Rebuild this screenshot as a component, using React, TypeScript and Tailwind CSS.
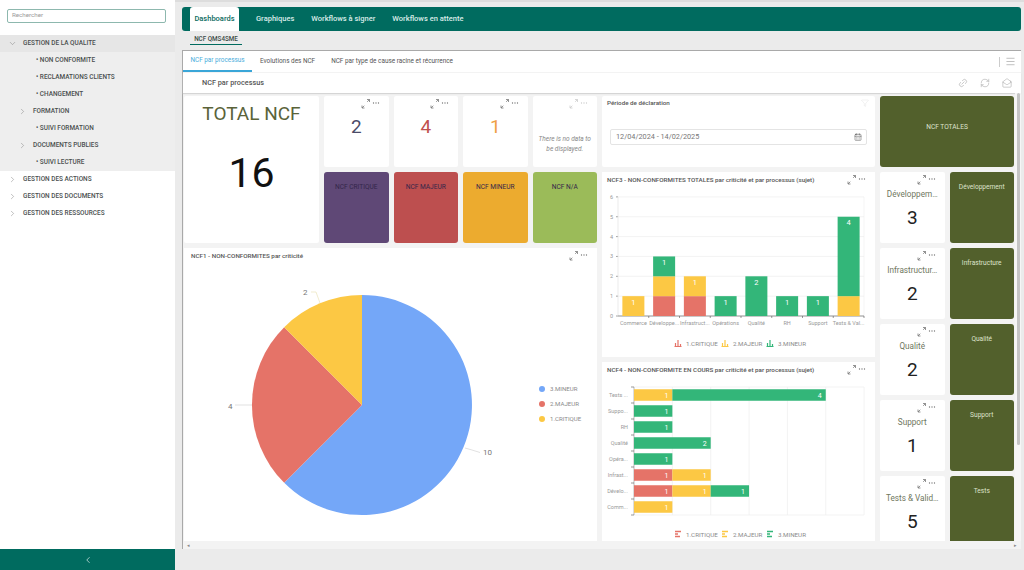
import React from "react";
import { ChevronDown, ChevronRight, ChevronLeft, Link2, RefreshCw, MailOpen, Filter, CalendarDays, Menu } from "lucide-react";

const RED = "#e57368";
const YEL = "#fcc844";
const GRN = "#33b679";
const BLU = "#74a7f8";

function Tools({ faint = false }: { faint?: boolean }) {
  const c = faint ? "#cccccc" : "#777777";
  return (
    <svg width="22" height="10" viewBox="0 0 22 10" className="absolute top-[3px] right-[8px]" fill="none">
      <path d="M3 6.5v2.5h2.5M3 9l2.3-2.3" stroke={c} strokeWidth="0.8" />
      <path d="M8 0.5h2.5v2.5M10.5 0.5l-2.3 2.3" stroke={c} strokeWidth="0.8" />
      <circle cx="14.5" cy="4" r="0.65" fill={c} />
      <circle cx="17" cy="4" r="0.65" fill={c} />
      <circle cx="19.5" cy="4" r="0.65" fill={c} />
    </svg>
  );
}

function SideRow({ label, level, open, caret }: { label: string; level: number; open?: boolean; caret?: boolean }) {
  const pad = level === 0 ? "pl-[23px]" : level === 1 ? "pl-[33px]" : "pl-[36px]";
  return (
    <div className={`relative h-[17px] flex items-center ${pad} text-[6.45px] font-medium text-[#4a4f4f] whitespace-nowrap`}>
      {caret && (
        <span className={`absolute top-[4px] ${level === 0 ? "left-[8px]" : "left-[18px]"} text-[#777]`}>
          {open ? <ChevronDown size={9} strokeWidth={1.2} /> : <ChevronRight size={9} strokeWidth={1.2} />}
        </span>
      )}
      {label}
    </div>
  );
}

function Kpi({ value, color, faint, label }: { value?: string; color?: string; faint?: boolean; label?: string }) {
  return (
    <div className="relative h-[71px] bg-white rounded-[2px] flex flex-col items-center overflow-hidden shrink-0">
      <Tools faint={faint} />
      {label && (
        <div className="mt-[15px] w-full text-center text-[8.2px] leading-[14px] text-[#6f7760] whitespace-nowrap">{label}</div>
      )}
      {value && (
        <div className={`${label ? "mt-[5px]" : "mt-[19px]"} text-[19px] leading-[24px]`} style={{ color }}>
          {value}
        </div>
      )}
      {!value && (
        <div className="mt-[38px] px-[2px] text-center text-[6.5px] leading-[10px] italic text-[#888]">
          There is no data to be displayed.
        </div>
      )}
    </div>
  );
}

function Tile({ label, bg, dark, top = "pt-[10px]" }: { label: string; bg: string; dark?: boolean; top?: string }) {
  return (
    <div
      className={`h-[71px] shrink-0 rounded-[3px] flex justify-center text-[6.6px] leading-[10px] ${top} ${dark ? "text-[#33264a]" : "text-[#dfe3cd]"}`}
      style={{ backgroundColor: bg }}
    >
      {label}
    </div>
  );
}

function Legend({ y, kind }: { y: number; kind: "v" | "h" }) {
  const items: [number, string, string][] = [
    [678, RED, "1.CRITIQUE"],
    [725, YEL, "2.MAJEUR"],
    [770, GRN, "3.MINEUR"],
  ];
  return (
    <g>
      {items.map(([x, c, t]) => (
        <g key={t}>
          {kind === "v" ? (
            <path d={`M${x - 2.5} ${y + 3}v-3M${x} ${y + 3}v-6M${x + 2.5} ${y + 3}v-2M${x - 3.5} ${y + 3.5}h7`} stroke={c} strokeWidth="1.2" />
          ) : (
            <path d={`M${x - 3} ${y - 2.5}h6M${x - 3} ${y}h3M${x - 3} ${y + 2.5}h5`} stroke={c} strokeWidth="1.3" />
          )}
          <text x={x + 8} y={y + 2.5} fontSize="6.2" fill="#8a8a8a">{t}</text>
        </g>
      ))}
    </g>
  );
}

function ChartV() {
  const x0 = 618, right = 864, y0 = 316, u = 19.85, cw = 30.75, bw = 22;
  const cats: [string, number, number, number][] = [
    ["Commerce", 0, 1, 0],
    ["Développe...", 1, 1, 1],
    ["Infrastruct...", 1, 1, 0],
    ["Opérations", 0, 0, 1],
    ["Qualité", 0, 0, 2],
    ["RH", 0, 0, 1],
    ["Support", 0, 0, 1],
    ["Tests & Val...", 0, 1, 4],
  ];
  return (
    <svg viewBox="602 190 273 167" className="block w-[273px] h-[167px]">
      {[0, 1, 2, 3, 4, 5, 6].map((n) => (
        <g key={n}>
          <line x1={x0} x2={right} y1={y0 - n * u} y2={y0 - n * u} stroke="#eeeeee" strokeWidth="0.7" />
          <line x1={x0 - 2} x2={x0} y1={y0 - n * u} y2={y0 - n * u} stroke="#666" strokeWidth="0.6" />
          <text x={x0 - 5} y={y0 - n * u + 2} fontSize="5.5" fill="#999" textAnchor="end">{n}</text>
        </g>
      ))}
      <line x1={x0} x2={x0} y1={y0 - 6 * u} y2={y0} stroke="#dddddd" strokeWidth="0.6" />
      <line x1={right} x2={right} y1={y0 - 6 * u} y2={y0} stroke="#eeeeee" strokeWidth="0.6" />
      <line x1={x0} x2={right} y1={y0} y2={y0} stroke="#555" strokeWidth="0.6" />
      {cats.map(([name, r, m, g], i) => {
        const x = x0 + i * cw + (cw - bw) / 2;
        const lbl = (v: number, base: number, c: string) =>
          v > 0 ? <rect x={x} y={y0 - (base + v) * u} width={bw} height={v * u} fill={c} /> : null;
        const txt = (v: number, base: number) =>
          v > 0 ? (
            <text x={x + bw / 2} y={y0 - (base + v) * u + 8.5} fontSize="7.5" fill="#fff" textAnchor="middle">{v}</text>
          ) : null;
        return (
          <g key={name}>
            {lbl(r, 0, RED)}
            {lbl(m, r, YEL)}
            {lbl(g, r + m, GRN)}
            {i !== 7 && i !== 1 && txt(m, r)}
            {txt(g, r + m)}
            <line x1={x0 + (i + 1) * cw} x2={x0 + (i + 1) * cw} y1={y0} y2={y0 + 2} stroke="#555" strokeWidth="0.6" />
            <text x={x + bw / 2} y={y0 + 9} fontSize="5.5" fill="#999" textAnchor="middle">{name}</text>
          </g>
        );
      })}
      <Legend y={343} kind="v" />
    </svg>
  );
}

function ChartH() {
  const x0 = 634, right = 864, top = 387, u = 38.35, ch = 16, bh = 11.5;
  const cats: [string, number, number, number][] = [
    ["Tests ...", 0, 1, 4],
    ["Suppo...", 0, 0, 1],
    ["RH", 0, 0, 1],
    ["Qualité", 0, 0, 2],
    ["Opéra...", 0, 0, 1],
    ["Infrast...", 1, 1, 0],
    ["Dévelo...", 1, 1, 1],
    ["Comm...", 0, 1, 0],
  ];
  return (
    <svg viewBox="602 380 273 161" className="block w-[273px] h-[161px]">
      {[0, 1, 2, 3, 4, 5, 6].map((n) => (
        <line key={n} x1={x0 + n * u} x2={x0 + n * u} y1={top} y2={top + 8 * ch} stroke="#eeeeee" strokeWidth="0.7" />
      ))}
      <line x1={x0} x2={right} y1={top} y2={top} stroke="#eeeeee" strokeWidth="0.7" />
      <line x1={x0} x2={right} y1={top + 8 * ch} y2={top + 8 * ch} stroke="#eeeeee" strokeWidth="0.7" />
      <line x1={x0} x2={x0} y1={top} y2={top + 8 * ch} stroke="#999" strokeWidth="0.6" />
      {cats.map(([name, r, m, g], i) => {
        const y = top + i * ch + (ch - bh) / 2;
        const seg = (v: number, base: number, c: string) =>
          v > 0 ? (
            <g>
              <rect x={x0 + base * u} y={y} width={v * u} height={bh} fill={c} />
              <text x={x0 + (base + v) * u - 6} y={y + 8.4} fontSize="7" fill="#fff" textAnchor="middle">{v}</text>
            </g>
          ) : null;
        return (
          <g key={name}>
            <line x1={x0 - 3} x2={x0} y1={top + i * ch} y2={top + i * ch} stroke="#555" strokeWidth="0.6" />
            {seg(r, 0, RED)}
            {seg(m, r, YEL)}
            {seg(g, r + m, GRN)}
            <text x={628} y={y + 8} fontSize="5.5" fill="#999" textAnchor="end">{name}</text>
          </g>
        );
      })}
      <line x1={x0 - 3} x2={x0} y1={top + 8 * ch} y2={top + 8 * ch} stroke="#555" strokeWidth="0.6" />
      <Legend y={534} kind="h" />
    </svg>
  );
}

function Pie() {
  return (
    <svg viewBox="184 264 413 277" className="block w-[413px] h-[277px]">
      <path d="M362 405L362 295A110 110 0 1 1 284.2 482.8Z" fill={BLU} />
      <path d="M362 405L284.2 482.8A110 110 0 0 1 284.2 327.2Z" fill={RED} />
      <path d="M362 405L284.2 327.2A110 110 0 0 1 362 295Z" fill={YEL} />
      <path d="M465 448L472 450L480 452.5" stroke="#ccc" strokeWidth="0.6" fill="none" />
      <text x="483" y="455" fontSize="8" fill="#777">10</text>
      <path d="M235 405H252" stroke="#ccc" strokeWidth="0.6" />
      <text x="228" y="409" fontSize="8" fill="#777">4</text>
      <path d="M311 292H316L320 303" stroke="#e8dfae" strokeWidth="0.6" fill="none" />
      <text x="303" y="295" fontSize="8" fill="#777">2</text>
      {([
        [389, BLU, "3.MINEUR"],
        [404, RED, "2.MAJEUR"],
        [419, YEL, "1.CRITIQUE"],
      ] as [number, string, string][]).map(([y, c, t]) => (
        <g key={t}>
          <circle cx="542" cy={y} r="3" fill={c} />
          <text x="550" y={y + 2.3} fontSize="6.1" fill="#8a8a8a">{t}</text>
        </g>
      ))}
    </svg>
  );
}

export default function App() {
  const font = { fontFamily: "Roboto, 'Liberation Sans', sans-serif" };
  const title = "text-[6.25px] leading-[10px] font-medium text-[#555]";
  return (
    <div className="w-[1024px] h-[570px] flex overflow-hidden bg-[#ebebeb]" style={font}>
      {/* sidebar */}
      <aside className="w-[175px] h-full bg-white flex flex-col shrink-0">
        <div className="pt-[9px] pl-[7px] pr-[9px]">
          <div className="h-[14px] border border-[#8db8ae] rounded-[2px] flex items-center px-[4px] text-[6.2px] text-[#999]">Rechercher</div>
        </div>
        <div className="mt-[12px] bg-[#eeeeee]">
          <div className="bg-[#e6e6e6]"><SideRow label="GESTION DE LA QUALITE" level={0} open caret /></div>
          <SideRow label="• NON CONFORMITE" level={2} />
          <SideRow label="• RECLAMATIONS CLIENTS" level={2} />
          <SideRow label="• CHANGEMENT" level={2} />
          <SideRow label="FORMATION" level={1} caret />
          <SideRow label="• SUIVI FORMATION" level={2} />
          <SideRow label="DOCUMENTS PUBLIES" level={1} caret />
          <SideRow label="• SUIVI LECTURE" level={2} />
        </div>
        <SideRow label="GESTION DES ACTIONS" level={0} caret />
        <SideRow label="GESTION DES DOCUMENTS" level={0} caret />
        <SideRow label="GESTION DES RESSOURCES" level={0} caret />
        <div className="mt-auto h-[21px] bg-[#006b5f] flex items-center justify-center text-white">
          <ChevronLeft size={10} strokeWidth={1.5} />
        </div>
      </aside>

      {/* main */}
      <main className="flex-1 min-w-0 pl-[7px] pr-[3px] flex flex-col border-t-2 border-[#dddddd]">
        <nav className="mt-[5px] h-[24px] bg-[#006b5f] rounded-[3px] flex items-stretch pl-[8px] text-[7.5px] font-medium text-[#d9ece8] shrink-0">
          <div className="w-[49px] bg-white rounded-t-[3px] flex items-center justify-center text-[#0a6b60]">Dashboards</div>
          <div className="ml-[17px] flex items-center">Graphiques</div>
          <div className="ml-[17px] flex items-center">Workflows à signer</div>
          <div className="ml-[17px] flex items-center">Workflows en attente</div>
        </nav>
        <div className="h-[19px] pl-[8px] shrink-0 flex items-start">
          <div className="mt-[3px] w-[52px] h-[11px] border-b border-[#006b5f] text-center text-[6.3px] leading-[10px] font-medium text-[#3a4a46]">NCF QMS4SME</div>
        </div>

        {/* panel */}
        <section className="h-[499px] bg-[#f3f3f3] border-t border-l border-[#a9a9a9] flex flex-col shrink-0">
          <div className="h-[21px] bg-white flex items-stretch text-[6.4px] text-[#555] shrink-0">
            <div className="w-[69px] border-b-2 border-[#3aa6d8] text-[#4aaedc] flex items-center justify-center">NCF par processus</div>
            <div className="ml-[8px] flex items-center">Evolutions des NCF</div>
            <div className="ml-[16px] flex items-center">NCF par type de cause racine et récurrence</div>
            <div className="ml-auto mr-[5px] flex items-center text-[#777]">
              <div className="w-px h-[10px] bg-[#ccc] mr-[5px]" />
              <Menu size={11} strokeWidth={1} />
            </div>
          </div>
          <div className="mt-px h-[20px] bg-white shadow-[0_1px_1px_#d5d5d5] flex items-center pl-[19px] pr-[9px] text-[7.3px] font-medium text-[#555] shrink-0">
            <span>NCF par processus</span>
            <div className="ml-auto flex items-center gap-[12px] text-[#888]">
              <Link2 size={10} strokeWidth={1} className="-rotate-45" />
              <RefreshCw size={10} strokeWidth={1} />
              <MailOpen size={10} strokeWidth={1} />
            </div>
          </div>

          <div className="h-[448px] flex shrink-0">
            <div className="w-[831px] pl-[1px] pt-[3px] h-[448px] overflow-hidden flex gap-[5px] shrink-0">
              {/* col 1 */}
              <div className="w-[413px] shrink-0 flex flex-col gap-[5px]">
                <div className="flex gap-[5px] h-[147px] shrink-0">
                  <div className="w-[135px] bg-white rounded-[2px] flex flex-col items-center shrink-0">
                    <div className="mt-[6px] text-[19px] leading-[24px] text-[#5a6339]">TOTAL NCF</div>
                    <div className="mt-[22px] text-[41px] leading-[50px] text-[#111]">16</div>
                  </div>
                  <div className="flex-1 grid grid-cols-4 gap-[5px] content-start">
                    <Kpi value="2" color="#4b4b68" />
                    <Kpi value="4" color="#c0504d" />
                    <Kpi value="1" color="#ef9f45" />
                    <Kpi faint />
                    <Tile label="NCF CRITIQUE" bg="#5f4876" dark />
                    <Tile label="NCF MAJEUR" bg="#bd4f4f" dark />
                    <Tile label="NCF MINEUR" bg="#ecab2f" dark />
                    <Tile label="NCF N/A" bg="#9bbb59" dark />
                  </div>
                </div>
                <div className="relative h-[293px] bg-white shrink-0">
                  <Tools />
                  <div className={`h-[16px] pl-[7px] pt-[3px] ${title}`}>NCF1 - NON-CONFORMITES par criticité</div>
                  <Pie />
                </div>
              </div>
              {/* col 2 */}
              <div className="w-[273px] shrink-0 flex flex-col gap-[5px]">
                <div className="relative h-[71px] bg-white rounded-[2px] shrink-0">
                  <Filter size={8} strokeWidth={0.8} className="absolute top-[3px] right-[6px] text-[#ccc]" />
                  <div className={`pl-[5px] pt-[2px] ${title}`}>Période de déclaration</div>
                  <div className="mt-[21px] ml-[8px] w-[257px] h-[16px] border border-[#e4e4e4] rounded-[2px] flex items-center justify-between pl-[5px] pr-[4px] text-[7.3px] text-[#777]">
                    <span>12/04/2024 - 14/02/2025</span>
                    <CalendarDays size={8} strokeWidth={1.4} className="text-[#444]" />
                  </div>
                </div>
                <div className="relative h-[185px] bg-white shrink-0">
                  <Tools />
                  <div className={`h-[18px] pl-[5px] pt-[3px] ${title}`}>NCF3 - NON-CONFORMITES TOTALES par criticité et par processus (sujet)</div>
                  <ChartV />
                </div>
                <div className="relative h-[179px] bg-white shrink-0">
                  <Tools />
                  <div className={`h-[18px] pl-[5px] pt-[3px] ${title}`}>NCF4 - NON-CONFORMITE EN COURS par criticité et par processus (sujet)</div>
                  <ChartH />
                </div>
              </div>
              {/* col 3 */}
              <div className="w-[134px] shrink-0 flex flex-col gap-[5px]">
                <Tile label="NCF TOTALES" bg="#52602c" top="pt-[26px]" />
                {[
                  ["Développem…", "3", "Développement"],
                  ["Infrastructur…", "2", "Infrastructure"],
                  ["Qualité", "2", "Qualité"],
                  ["Support", "1", "Support"],
                  ["Tests & Valid…", "5", "Tests"],
                ].map(([a, n, b]) => (
                  <div key={b} className="grid grid-cols-2 gap-[5px] shrink-0">
                    <Kpi label={a} value={n} color="#222" />
                    <Tile label={b} bg="#52602c" />
                  </div>
                ))}
              </div>
            </div>
            {/* vertical scrollbar */}
            <div className="ml-px w-[6px] h-[448px] bg-[#f6f6f6] pl-[2px] shrink-0">
              <div className="w-[3px] h-[352px] bg-[#c4c4c4] rounded-[2px]" />
            </div>
          </div>
          {/* horizontal scrollbar */}
          <div className="h-[8px] flex items-center justify-between pl-[4px] pr-[4px] text-[#888] text-[5px] leading-[8px] shrink-0">
            <span>◂</span>
            <span>▸</span>
          </div>
        </section>
      </main>
    </div>
  );
}
